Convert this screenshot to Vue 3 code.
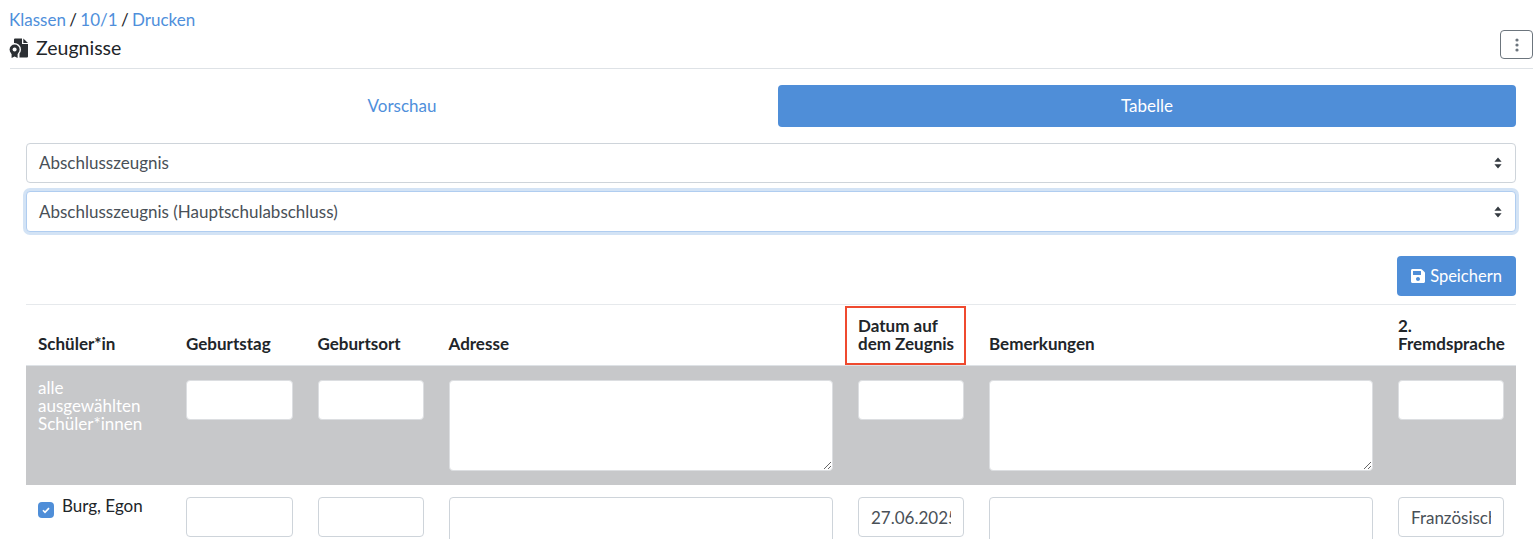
<script setup>
const cols = [148, 131.5, 131, 409.5, 131, 409, 130]
const selects = [
  { label: 'Abschlusszeugnis', focus: false },
  { label: 'Abschlusszeugnis (Hauptschulabschluss)', focus: true }
]
</script>

<template>
  <div class="page">
    <div class="crumbs">
      <a>Klassen</a> / <a>10/1</a> / <a>Drucken</a>
    </div>
    <header class="head">
      <div class="title">
        <svg class="cert" viewBox="0 0 20 20" width="20" height="20">
          <path fill="#2b2f33" d="M6 0.5h7v5.5h6v12.5a1 1 0 0 1-1 1H10.5v-4a6.5 6.5 0 0 0 1.5-4A6.5 6.5 0 0 0 5 5V1.5a1 1 0 0 1 1-1z" />
          <path fill="#2b2f33" d="M14.3 0.5L19 5h-4.7z" />
          <circle cx="5.6" cy="11.6" r="5" fill="#2b2f33" />
          <circle cx="5.6" cy="11.6" r="2" fill="#fff" />
          <path fill="#2b2f33" d="M2.6 15.5h6V20L5.6 18.4 2.6 20z" />
        </svg>
        <span>Zeugnisse</span>
      </div>
      <button class="menu" aria-label="Menü">
        <svg viewBox="0 0 4 14" width="4" height="14">
          <circle cx="2" cy="2" r="1.6" /><circle cx="2" cy="7" r="1.6" /><circle cx="2" cy="12" r="1.6" />
        </svg>
      </button>
    </header>

    <main class="content">
      <nav class="tabs">
        <a class="tab">Vorschau</a>
        <a class="tab active">Tabelle</a>
      </nav>

      <div class="selects">
        <div v-for="s in selects" :key="s.label" class="select" :class="{ focus: s.focus }">
          <span>{{ s.label }}</span>
          <svg viewBox="0 0 8 12" width="8" height="12">
            <path fill="#343a40" d="M4 0.5L7.6 4.8H0.4zM4 11.5L0.4 7.2H7.6z" />
          </svg>
        </div>
      </div>

      <div class="actions">
        <button class="save">
          <svg viewBox="0 0 448 512" width="14" height="16">
            <path fill="#fff" d="M433.941 129.941l-83.882-83.882A48 48 0 0 0 316.118 32H48C21.49 32 0 53.49 0 80v352c0 26.51 21.49 48 48 48h352c26.51 0 48-21.49 48-48V163.882a48 48 0 0 0-14.059-33.941zM224 416c-35.346 0-64-28.654-64-64 0-35.346 28.654-64 64-64s64 28.654 64 64c0 35.346-28.654 64-64 64zm96-304.52V212c0 6.627-5.373 12-12 12H76c-6.627 0-12-5.373-12-12V108c0-6.627 5.373-12 12-12h228.52c3.183 0 6.235 1.264 8.485 3.515l3.48 3.48A11.996 11.996 0 0 1 320 111.48z" />
          </svg>
          Speichern
        </button>
      </div>

      <table class="grid">
        <colgroup>
          <col v-for="(c, i) in cols" :key="i" :style="{ width: c + 'px' }" />
        </colgroup>
        <thead>
          <tr>
            <th>Schüler*in</th>
            <th>Geburtstag</th>
            <th>Geburtsort</th>
            <th>Adresse</th>
            <th class="marked">Datum auf dem Zeugnis</th>
            <th>Bemerkungen</th>
            <th>2. Fremdsprache</th>
          </tr>
        </thead>
        <tbody>
          <tr class="all">
            <td class="all-label">alle ausgewählten Schüler*innen</td>
            <td><input /></td>
            <td><input /></td>
            <td><textarea rows="4"></textarea></td>
            <td><input /></td>
            <td><textarea rows="4"></textarea></td>
            <td><input /></td>
          </tr>
          <tr>
            <td>
              <div class="student">
                <span class="check">
                  <svg viewBox="0 0 12 12" width="10" height="10">
                    <path d="M2.4 6.3l2.4 2.4 4.8-5" fill="none" stroke="#fff" stroke-width="2" />
                  </svg>
                </span>
                <span class="name">Burg, Egon</span>
              </div>
            </td>
            <td><input /></td>
            <td><input /></td>
            <td><textarea rows="4"></textarea></td>
            <td><input value="27.06.2025" /></td>
            <td><textarea rows="4"></textarea></td>
            <td><input value="Französisch" /></td>
          </tr>
        </tbody>
      </table>
    </main>
  </div>
</template>

<style scoped>
.page {
  height: 539px;
  overflow: hidden;
  box-sizing: border-box;
  padding: 10px 3px 0 10px;
  font-family: "Lato", "Open Sans", sans-serif;
  font-size: 17px;
  line-height: 20px;
  color: #212529;
  background: #fff;
}
a { color: #4f8fdb; }
.crumbs { height: 20px; margin-left: -1px; word-spacing: -1px; }
.head {
  display: flex;
  justify-content: space-between;
  align-items: flex-end;
  height: 39px;
  padding-bottom: 9px;
  box-sizing: border-box;
  border-bottom: 1px solid #dee2e6;
}
.title {
  display: flex;
  align-items: center;
  gap: 7px;
  margin-left: -1px;
  font-size: 19.5px;
  height: 22px;
}
.menu {
  width: 33px;
  height: 29px;
  padding: 0;
  background: #fff;
  border: 1px solid #6c757d;
  border-radius: 4px;
  display: flex;
  align-items: center;
  justify-content: center;
}
.menu circle { fill: #6c757d; }
.content { padding: 16px 17px 0 16px; }
.tabs { display: grid; grid-template-columns: 752px 738px; height: 42px; }
.tab {
  display: flex;
  align-items: center;
  justify-content: center;
  border-radius: 4px;
}
.tab.active { background: #4f8ed8; color: #fff; }
.selects { display: flex; flex-direction: column; gap: 8px; margin-top: 16px; }
.select {
  height: 40px;
  box-sizing: border-box;
  display: flex;
  align-items: center;
  justify-content: space-between;
  padding: 0 13px 0 12px;
  border: 1px solid #ced4da;
  border-radius: 4px;
  color: #495057;
  background: #fff;
}
.select.focus {
  height: 41px;
  border-color: #b0cdf0;
  box-shadow: 0 0 0 3px rgba(79, 142, 216, 0.25);
}
.actions { display: flex; justify-content: flex-end; margin-top: 24px; }
.save {
  width: 119px;
  height: 40px;
  padding: 0;
  display: flex;
  align-items: center;
  justify-content: center;
  gap: 5px;
  background: #4f8ed8;
  border: 0;
  border-radius: 4px;
  color: #fff;
  font: inherit;
  font-size: 16.5px;
}
.grid {
  width: 1490px;
  margin-top: 8px;
  table-layout: fixed;
  border-collapse: collapse;
  border-top: 1px solid #e6e9ec;
}
th {
  height: 61px;
  padding: 0 12px 12px;
  box-sizing: border-box;
  vertical-align: bottom;
  text-align: left;
  font-weight: 700;
  line-height: 18px;
  border-bottom: 1px solid #dee2e6;
}
.marked { position: relative; }
.marked::after {
  content: "";
  position: absolute;
  left: -1px;
  top: 1px;
  width: 121px;
  height: 59px;
  box-sizing: border-box;
  border: 2px solid #ef4a2f;
}
td { padding: 12px 13px 12px 12px; vertical-align: top; }
td:last-child { padding-right: 12px; }
.all { background: #c7c8ca; }
.all td { padding-top: 14px; padding-bottom: 14px; }
.all input, .all textarea { border-color: #dcdee1; }
.all-label { color: #fff; line-height: 18px; }
.all td.all-label { padding-top: 13px; }
input, textarea {
  display: block;
  width: 100%;
  box-sizing: border-box;
  padding: 6px 12px;
  border: 1px solid #ced4da;
  border-radius: 4px;
  background: #fff;
  color: #495057;
  font: inherit;
  line-height: 24px;
  outline: 0;
}
input { height: 40px; }
textarea { height: 91px; resize: vertical; }
.student { display: flex; gap: 8px; align-items: flex-start; }
.name { line-height: 18px; }
.check {
  flex: none;
  width: 16px;
  height: 16px;
  margin-top: 5px;
  display: flex;
  align-items: center;
  justify-content: center;
  background: #4f8ed8;
  border-radius: 4px;
}
</style>
